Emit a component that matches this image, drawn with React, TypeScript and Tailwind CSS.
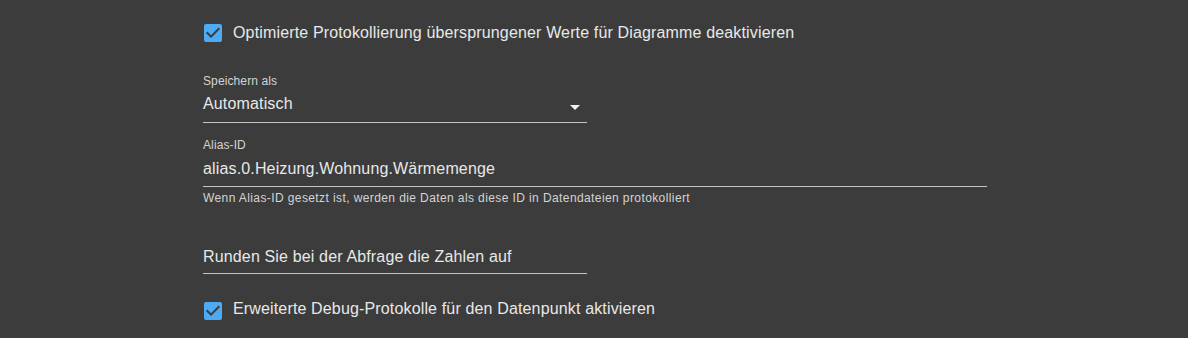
import React from "react";

const font = { fontFamily: "'Liberation Sans', Arial, sans-serif" };

function CheckIcon() {
  return (
    <svg viewBox="0 0 24 24" className="h-6 w-6 shrink-0 fill-[#4dabf5]">
      <path d="M19 3H5c-1.11 0-2 .9-2 2v14c0 1.1.89 2 2 2h14c1.11 0 2-.9 2-2V5c0-1.1-.89-2-2-2zm-9 14l-5-5 1.41-1.41L10 14.17l7.59-7.59L19 8l-9 9z" />
    </svg>
  );
}

function CheckRow({
  label,
  className = "",
  textClass = "",
}: {
  label: string;
  className?: string;
  textClass?: string;
}) {
  return (
    <label className={`flex h-6 items-center gap-2 ${className}`}>
      <span className="-ml-[2px] flex">
        <CheckIcon />
      </span>
      <span className={`text-[16px] leading-6 tracking-[0.15px] text-[#e8e8e8] ${textClass}`}>{label}</span>
    </label>
  );
}

export default function App() {
  return (
    <div className="h-[338px] w-full overflow-hidden bg-[#3c3c3c] pl-[203px] pt-[21px]" style={font}>
      <CheckRow label="Optimierte Protokollierung übersprungener Werte für Diagramme deaktivieren" />

      {/* Speichern als */}
      <div className="mt-[28px] w-[384px]">
        <div className="text-[12px] leading-4 tracking-[0.11px] text-[#d4d4d4]">Speichern als</div>
        <div className="relative mt-[3px] border-b border-[#c4c4c4] pb-[6px]">
          <div className="text-[16px] leading-6 tracking-[0.15px] text-[#e8e8e8]">Automatisch</div>
          <svg viewBox="0 0 24 24" className="absolute right-0 top-[3px] h-6 w-6 fill-[#f2f2f2]">
            <path d="M7 10l5 5 5-5z" />
          </svg>
        </div>
      </div>

      {/* Alias-ID */}
      <div className="mt-[14px] w-[784px]">
        <div className="text-[12px] leading-4 tracking-[0.11px] text-[#d4d4d4]">Alias-ID</div>
        <div className="mt-[4px] border-b border-[#c4c4c4] pb-[5px] text-[16px] leading-6 tracking-[0.15px] text-[#e8e8e8]">
          alias.0.Heizung.Wohnung.Wärmemenge
        </div>
        <div className="mt-[3px] text-[12px] leading-4 tracking-[0.4px] text-[#d4d4d4]">
          Wenn Alias-ID gesetzt ist, werden die Daten als diese ID in Datendateien protokolliert
        </div>
      </div>

      {/* Runden */}
      <div className="mt-[39px] w-[384px] border-b border-[#c4c4c4] pb-[4px] text-[16px] leading-6 tracking-[0.15px] text-[#e8e8e8]">
        Runden Sie bei der Abfrage die Zahlen auf
      </div>

      <CheckRow
        className="mt-[25px]"
        textClass="-mt-[4px]"
        label="Erweiterte Debug-Protokolle für den Datenpunkt aktivieren"
      />
    </div>
  );
}
